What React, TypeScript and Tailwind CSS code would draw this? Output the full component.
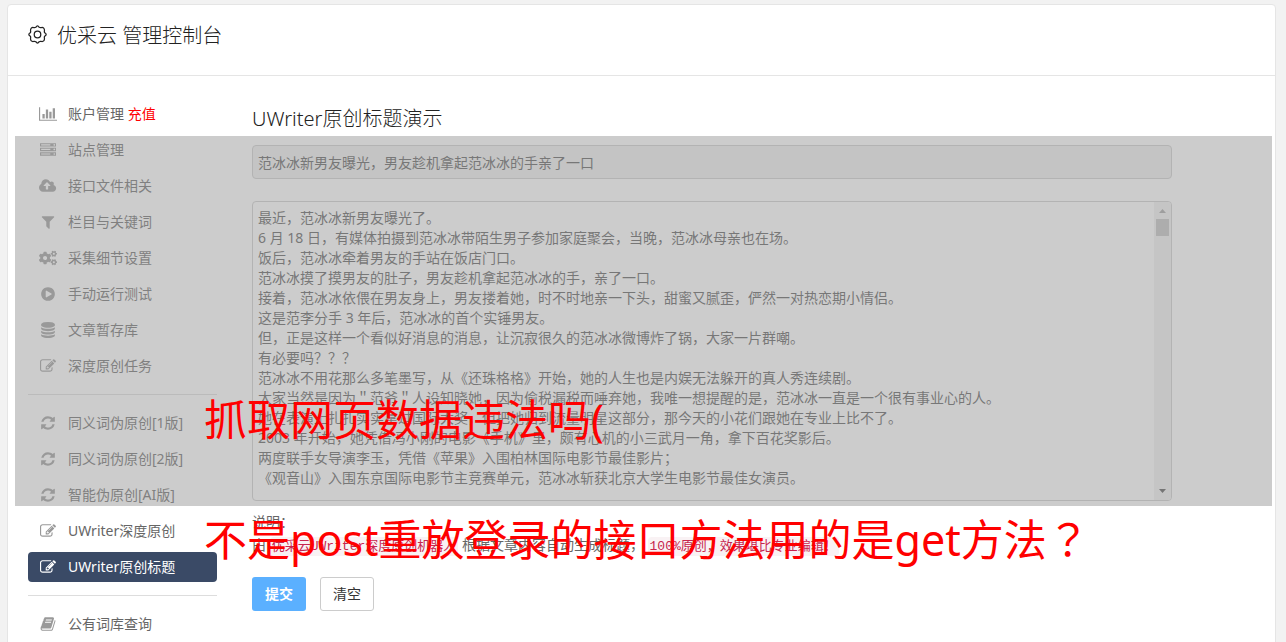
import React from "react";
import { FaCogs } from "react-icons/fa";

interface IconShape {
  width: number;
  d: string;
}

// Paths share a 1792 unit em, "width" is the glyph's own advance
const ICONS: Record<string, IconShape> = {
  chart: {
    width: 2048,
    d: "M640 896v512h-256v-512h256zm384-512v1024h-256v-1024h256zm1024 1152v128h-2048v-1536h128v1408h1920zm-640-896v768h-256v-768h256zm384-384v1152h-256v-1152h256z",
  },
  server: {
    width: 1792,
    d: "M128 1408h1024v-128h-1024v128zm0-512h1024v-128h-1024v128zm1568 448q0-40-28-68t-68-28-68 28-28 68 28 68 68 28 68-28 28-68zm-1568-960h1024v-128h-1024v128zm1568 448q0-40-28-68t-68-28-68 28-28 68 28 68 68 28 68-28 28-68zm0-512q0-40-28-68t-68-28-68 28-28 68 28 68 68 28 68-28 28-68zm96 832v384h-1792v-384h1792zm0-512v384h-1792v-384h1792zm0-512v384h-1792v-384h1792z",
  },
  upload: {
    width: 1920,
    d: "M1280 864q0-14-9-23l-352-352q-9-9-23-9t-23 9l-351 351q-10 12-10 24 0 14 9 23t23 9h224v352q0 13 9.5 22.5t22.5 9.5h192q13 0 22.5-9.5t9.5-22.5v-352h224q13 0 22.5-9.5t9.5-22.5zm640 288q0 159-112.5 271.5t-271.5 112.5h-1088q-185 0-316.5-131.5t-131.5-316.5q0-130 70-240t188-165q-2-30-2-43 0-212 150-362t362-150q156 0 285.5 87t188.5 231q71-62 166-62 106 0 181 75t75 181q0 76-41 138 130 31 213.5 135.5t83.5 238.5z",
  },
  filter: {
    width: 1792,
    d: "M1595 295q17 41-14 70l-493 493v742q0 42-39 59-13 5-25 5-27 0-45-19l-256-256q-19-19-19-45v-486l-493-493q-31-29-14-70 17-39 59-39h1280q42 0 59 39z",
  },
  play: {
    width: 1792,
    d: "M896 128q209 0 385.5 103t279.5 279.5 103 385.5-103 385.5-279.5 279.5-385.5 103-385.5-103-279.5-279.5-103-385.5 103-385.5 279.5-279.5 385.5-103zm384 823q32-18 32-55t-32-55l-544-320q-31-19-64-1-32 19-32 56v640q0 37 32 56 16 8 32 8 17 0 32-9z",
  },
  database: {
    width: 1792,
    d: "M896 768q237 0 443-43t325-127v170q0 69-103 128t-280 93.5-385 34.5-385-34.5-280-93.5-103-128v-170q119 84 325 127t443 43zm0 768q237 0 443-43t325-127v170q0 69-103 128t-280 93.5-385 34.5-385-34.5-280-93.5-103-128v-170q119 84 325 127t443 43zm0-384q237 0 443-43t325-127v170q0 69-103 128t-280 93.5-385 34.5-385-34.5-280-93.5-103-128v-170q119 84 325 127t443 43zm0-1152q208 0 385 34.5t280 93.5 103 128v128q0 69-103 128t-280 93.5-385 34.5-385-34.5-280-93.5-103-128v-128q0-69 103-128t280-93.5 385-34.5z",
  },
  edit: {
    width: 1792,
    d: "M888 1184l116-116-152-152-116 116v56h96v96h56zm440-720q-16-16-33 1l-350 350q-17 17-1 33t33-1l350-350q17-17 1-33zm80 594v190q0 119-84.5 203.5t-203.5 84.5h-832q-119 0-203.5-84.5t-84.5-203.5v-832q0-119 84.5-203.5t203.5-84.5h832q63 0 117 25 15 7 18 23 3 17-9 29l-49 49q-14 14-32 8-23-6-45-6h-832q-66 0-113 47t-47 113v832q0 66 47 113t113 47h832q66 0 113-47t47-113v-126q0-13 9-22l64-64q15-15 35-7t20 29zm-96-738l288 288-672 672h-288v-288zm444 132l-92 92-288-288 92-92q28-28 68-28t68 28l152 152q28 28 28 68t-28 68z",
  },
  refresh: {
    width: 1792,
    d: "M1639 1056q0 5-1 7-64 268-268 434.5t-478 166.5q-146 0-282.5-55t-243.5-157l-129 129q-19 19-45 19t-45-19-19-45v-448q0-26 19-45t45-19h448q26 0 45 19t19 45-19 45l-137 137q71 66 161 102t187 36q134 0 250-65t186-179q11-17 53-117 8-23 30-23h192q13 0 22.5 9.5t9.5 22.5zm25-800v448q0 26-19 45t-45 19h-448q-26 0-45-19t-19-45 19-45l138-138q-148-137-349-137-134 0-250 65t-186 179q-11 17-53 117-8 23-30 23h-199q-13 0-22.5-9.5t-9.5-22.5v-7q65-268 270-434.5t480-166.5q146 0 284 55.5t245 156.5l130-129q19-19 45-19t45 19 19 45z",
  },
  book: {
    width: 1792,
    d: "M1703 478q40 57 18 129l-275 906q-19 64-76.5 107.5t-122.5 43.5h-923q-77 0-148.5-53.5t-99.5-131.5q-24-67-2-127 0-4 3-27t4-37q1-8-3-21.5t-3-19.5q2-11 8-21t16.5-23.5 16.5-23.5q23-38 45-91.5t30-91.5q3-10 .5-30t-.5-28q3-11 17-28t17-23q21-36 42-92t25-90q1-9-2.5-32t.5-28q4-13 22-30.5t22-22.5q19-26 42.5-84.5t27.5-96.5q1-8-3-25.5t-2-26.5q2-8 9-18t18-23 17-21q8-12 16.5-30.5t15-35 16-36 19.5-32 26.5-23.5 36-11.5 47.5 5.5l-1 3q38-9 51-9h761q74 0 114 56t18 130l-274 906q-36 119-71.5 153.5t-128.5 34.5h-869q-27 0-38 15-11 16-1 43 24 70 144 70h923q29 0 56-15.5t35-41.5l300-987q7-22 5-57 38 15 59 43zm-1064 2q-4 13 2 22.5t20 9.5h608q13 0 25.5-9.5t16.5-22.5l21-64q4-13-2-22.5t-20-9.5h-608q-13 0-25.5 9.5t-16.5 22.5zm-83 256q-4 13 2 22.5t20 9.5h608q13 0 25.5-9.5t16.5-22.5l21-64q4-13-2-22.5t-20-9.5h-608q-13 0-25.5 9.5t-16.5 22.5z",
  },
};

interface MenuItem {
  icon: string;
  label: string;
  extra?: string;
  active?: boolean;
}

const menuGroups: MenuItem[][] = [
  [
    { icon: "chart", label: "账户管理", extra: "充值" },
    { icon: "server", label: "站点管理" },
    { icon: "upload", label: "接口文件相关" },
    { icon: "filter", label: "栏目与关键词" },
    { icon: "cogs", label: "采集细节设置" },
    { icon: "play", label: "手动运行测试" },
    { icon: "database", label: "文章暂存库" },
    { icon: "edit", label: "深度原创任务" },
  ],
  [
    { icon: "refresh", label: "同义词伪原创[1版]" },
    { icon: "refresh", label: "同义词伪原创[2版]" },
    { icon: "refresh", label: "智能伪原创[AI版]" },
    { icon: "edit", label: "UWriter深度原创" },
    { icon: "edit", label: "UWriter原创标题", active: true },
  ],
  [{ icon: "book", label: "公有词库查询" }],
];

const article = [
  "最近，范冰冰新男友曝光了。",
  "6 月 18 日，有媒体拍摄到范冰冰带陌生男子参加家庭聚会，当晚，范冰冰母亲也在场。",
  "饭后，范冰冰牵着男友的手站在饭店门口。",
  "范冰冰摸了摸男友的肚子，男友趁机拿起范冰冰的手，亲了一口。",
  "接着，范冰冰依偎在男友身上，男友搂着她，时不时地亲一下头，甜蜜又腻歪，俨然一对热恋期小情侣。",
  "这是范李分手 3 年后，范冰冰的首个实锤男友。",
  "但，正是这样一个看似好消息的消息，让沉寂很久的范冰冰微博炸了锅，大家一片群嘲。",
  "有必要吗？？？",
  "范冰冰不用花那么多笔墨写，从《还珠格格》开始，她的人生也是内娱无法躲开的真人秀连续剧。",
  "大家当然是因为＂范爷＂人设知晓她，因为偷税漏税而唾弃她，我唯一想提醒的是，范冰冰一直是一个很有事业心的人。",
  "她在表演上扎扎实实拿过国际大奖，但把她归到流量明星这部分，那今天的小花们跟她在专业上比不了。",
  "2003 年开始，她凭借冯小刚的电影《手机》里，颇有心机的小三武月一角，拿下百花奖影后。",
  "两度联手女导演李玉，凭借《苹果》入围柏林国际电影节最佳影片；",
  "《观音山》入围东京国际电影节主竞赛单元，范冰冰斩获北京大学生电影节最佳女演员。",
].join("\n");

const MenuIcon: React.FC<{ name: string }> = ({ name }) => {
  if (name === "cogs") {
    return <FaCogs className="h-[18px] w-[18px]" />;
  }
  const icon = ICONS[name];
  return (
    <svg
      viewBox={`0 0 ${icon.width} 1792`}
      className="h-4 w-auto shrink-0"
      fill="currentColor"
      fillRule="evenodd"
      aria-hidden="true"
    >
      <path d={icon.d} />
    </svg>
  );
};

const GearIcon: React.FC = () => (
  <svg
    viewBox="0 0 18 18"
    className="h-[19px] w-[19px]"
    fill="none"
    stroke="currentColor"
    strokeWidth="1.2"
    strokeLinejoin="round"
    aria-hidden="true"
  >
    <path d="M7.4 2.2Q9 -.6 10.6 2.2Q11.6 2.8 12.7 2.4Q15.6 2 15.6 5.3Q15.2 6.4 15.8 7.4Q18.6 9 15.8 10.6Q15.2 11.6 15.6 12.7Q15.6 16 12.7 15.6Q11.6 15.2 10.6 15.8Q9 18.6 7.4 15.8Q6.4 15.2 5.3 15.6Q2.4 16 2.4 12.7Q2.8 11.6 2.2 10.6Q-.6 9 2.2 7.4Q2.8 6.4 2.4 5.3Q2.4 2 5.3 2.4Q6.4 2.8 7.4 2.2Z" />
    <circle cx="9" cy="9" r="3.1" />
  </svg>
);

const Sidebar: React.FC = () => (
  <nav className="w-[189px] shrink-0">
    {menuGroups.map((group, index) => (
      <React.Fragment key={index}>
        {index > 0 && <hr className="mt-[13px] mb-[13px] border-[#ddd]" />}
        <ul className="flex flex-col gap-[6px]">
          {group.map((item) => (
            <li key={item.label}>
              <a
                href="#"
                className={`flex h-[30px] items-center gap-[10px] rounded pl-[10px] ${
                  item.active ? "bg-[#3a4a66] text-white" : "text-[#666]"
                }`}
              >
                <span
                  className={`flex w-5 justify-center ${
                    item.active ? "text-white" : "text-[#999]"
                  }`}
                >
                  <MenuIcon name={item.icon} />
                </span>
                <span>
                  {item.label}
                  {item.extra && (
                    <span className="text-[#f00]"> {item.extra}</span>
                  )}
                </span>
              </a>
            </li>
          ))}
        </ul>
      </React.Fragment>
    ))}
  </nav>
);

const Code: React.FC<{ children: React.ReactNode }> = ({ children }) => (
  <code className="rounded bg-[#f9f2f4] px-[2px] py-[2px] font-['Liberation_Mono','Noto_Sans_CJK_SC',monospace] text-[13px] text-[#c7254e]">
    {children}
  </code>
);

const TitleForm: React.FC = () => (
  <form className="mr-[103px] min-w-0 flex-1 pt-[6px]">
    <h2 className="text-xl leading-7 font-light text-[#222]">
      UWriter原创标题演示
    </h2>
    <input
      type="text"
      readOnly
      aria-label="原创标题"
      defaultValue="范冰冰新男友曝光，男友趁机拿起范冰冰的手亲了一口"
      className="mt-3 block h-[34px] w-full rounded border border-[#ccc] bg-[#eee] px-[5px] text-[#555]"
    />
    <div className="mt-[22px] flex h-[300px] overflow-hidden rounded border border-[#ccc]">
      <textarea
        aria-label="文章内容"
        defaultValue={article}
        className="min-w-0 flex-1 resize-none overflow-hidden px-[5px] py-[6px] leading-5 text-[#555]"
      />
      <div className="flex w-[17px] flex-col items-center bg-[#f1f1f1]">
        <svg viewBox="0 0 17 17" className="h-[17px] w-[17px]" fill="#a3a3a3">
          <path d="M5 11h7L8.500 7z" />
        </svg>
        <div className="h-[17px] w-[13px] bg-[#c1c1c1]" />
        <svg
          viewBox="0 0 17 17"
          className="mt-auto h-[17px] w-[17px]"
          fill="#505050"
        >
          <path d="M5 6h7L8.500 10z" />
        </svg>
      </div>
    </div>
    <div className="mt-[9px] leading-[23px] text-[#666]">
      <p>说明：</p>
      <p>
        由 <Code>优采云UWriter深度原创机器人</Code>{" "}
        根据文章内容自动生成标题， <Code>100%原创，效果堪比专业编辑！</Code>
      </p>
    </div>
    <div className="mt-[19px] flex gap-[14px]">
      <button
        type="button"
        className="h-[34px] w-[54px] rounded-[3px] bg-[#5bb0ff] font-bold text-white"
      >
        提交
      </button>
      <button
        type="button"
        className="h-[34px] w-[54px] rounded-[3px] border border-[#ccc] bg-white text-[#333]"
      >
        清空
      </button>
    </div>
  </form>
);

const App: React.FC = () => {
  return (
    <div className="relative h-screen overflow-hidden bg-[#f2f2f2] pt-1 pr-[10px] pl-[7px] font-['Noto_Sans','Noto_Sans_CJK_SC',sans-serif] text-sm">
      <div className="min-h-screen rounded-t border border-[#e5e5e5] bg-white">
        <header className="flex h-[71px] items-start gap-[10px] border-b border-[#e5e5e5] px-5 pt-[17px] text-[#222]">
          <span className="pt-[3px]">
            <GearIcon />
          </span>
          <h1 className="text-xl leading-7 font-light">优采云 管理控制台</h1>
        </header>
        <div className="flex gap-[35px] pt-[23px] pl-5">
          <Sidebar />
          <TitleForm />
        </div>
      </div>

      {/* Banner with the caption laid over the page */}
      <div className="pointer-events-none absolute top-[136px] right-[14px] left-[15px] h-[370px] bg-[#999]/50" />
      <div className="pointer-events-none absolute top-[360px] left-[204px] text-[43px] leading-[120px] whitespace-nowrap text-[#f00]">
        <p>抓取网页数据违法吗(</p>
        <p>
          不是post重放登录的接口方法用的是get方法
          <span className="font-['Noto_Sans','Noto_Sans_CJK_JP',sans-serif]">
            ？
          </span>
        </p>
      </div>
    </div>
  );
};

export default App;
